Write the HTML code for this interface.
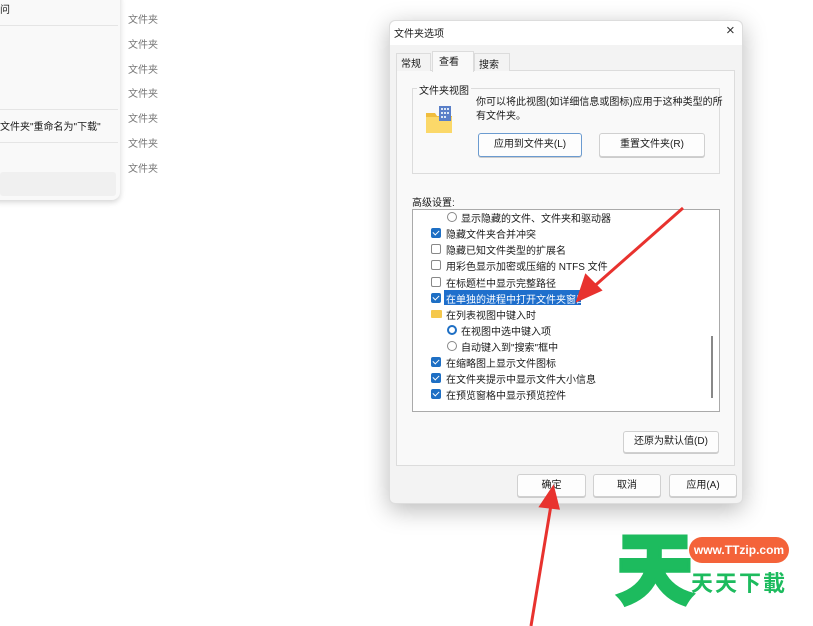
<!DOCTYPE html>
<html><head><meta charset="utf-8"><style>
*{margin:0;padding:0;box-sizing:border-box}
body{width:813px;height:626px;background:#fff;position:relative;overflow:hidden;font-family:"Liberation Sans","Noto Sans CJK SC",sans-serif;font-size:10px;color:#1a1a1a}
.a{position:absolute;white-space:nowrap}
.btn{position:absolute;border:1px solid #d0d0d0;border-radius:3px;background:#fdfdfd;text-align:center;font-size:10px;box-shadow:0 1px 0 #ccc}
.cb{position:absolute;width:10px;height:10px;border-radius:2px;left:431px}
.on{background:#1e6fc4}
.on:after{content:"";position:absolute;left:3px;top:1px;width:3px;height:5px;border:solid #fff;border-width:0 1px 1px 0;transform:rotate(45deg)}
.off{border:1px solid #888;background:#fff}
.rd{position:absolute;width:10px;height:10px;border-radius:50%;border:1px solid #888;left:447px}
.t{position:absolute;left:446px;font-size:10px}
.g{position:absolute;left:128px;color:#777;font-size:10px}
</style></head><body>
<div class="a" style="left:-10px;top:-10px;width:130px;height:210px;background:#f9f9f9;border-radius:8px;box-shadow:0 2px 6px rgba(0,0,0,.18)"></div>
<div class="a" style="left:0;top:25px;width:118px;height:1px;background:#e5e5e5"></div>
<div class="a" style="left:0;top:109px;width:118px;height:1px;background:#e5e5e5"></div>
<div class="a" style="left:0;top:142px;width:118px;height:1px;background:#e5e5e5"></div>
<div class="a" style="left:0;top:172px;width:116px;height:24px;background:#f0f0f0;border-radius:3px"></div>
<div class="a" style="left:0;top:1px;font-size:10px">问</div>
<div class="a" style="left:0;top:118px;font-size:10px">文件夹"重命名为"下载"</div>
<div class="g" style="top:11px">文件夹</div><div class="g" style="top:36px">文件夹</div><div class="g" style="top:61px">文件夹</div><div class="g" style="top:85px">文件夹</div><div class="g" style="top:110px">文件夹</div><div class="g" style="top:135px">文件夹</div><div class="g" style="top:160px">文件夹</div>
<div class="a" style="left:389px;top:20px;width:354px;height:484px;background:#f3f3f3;border-radius:6px;box-shadow:0 6px 24px rgba(0,0,0,.28);border:1px solid #ddd"></div>
<div class="a" style="left:390px;top:21px;width:352px;height:24px;background:#fff;border-radius:6px 6px 0 0"></div>
<div class="a" style="left:394px;top:25px;font-size:10px">文件夹选项</div>
<div class="a" style="left:726px;top:22px;font-size:15px;color:#333">×</div>
<div class="a" style="left:396px;top:70px;width:339px;height:396px;background:#f9f9f9;border:1px solid #dcdcdc"></div>
<div class="a" style="left:396px;top:53px;width:35px;height:18px;border:1px solid #dcdcdc;border-bottom:none;background:#f3f3f3;padding:1px 4px">常规</div>
<div class="a" style="left:474px;top:53px;width:36px;height:18px;border:1px solid #dcdcdc;border-bottom:none;background:#f3f3f3;padding:2px 4px">搜索</div>
<div class="a" style="left:432px;top:51px;width:42px;height:21px;border:1px solid #dcdcdc;border-bottom:none;background:#f9f9f9;padding:1px 6px">查看</div>
<div class="a" style="left:412px;top:88px;width:308px;height:86px;border:1px solid #dcdcdc"></div>
<div class="a" style="left:417px;top:82px;background:#f9f9f9;padding:0 2px">文件夹视图</div>
<svg class="a" style="left:425px;top:105px" width="30" height="30"><path d="M1 8h9l2 3h15v17H1z" fill="#f0bd3e"/><rect x="1" y="12" width="26" height="16" fill="#fbd869"/><rect x="14" y="1" width="12" height="15" fill="#5a7fc8"/><path d="M16 3h2v2h-2zM19 3h2v2h-2zM22 3h2v2h-2zM16 7h2v2h-2zM19 7h2v2h-2zM22 7h2v2h-2zM16 11h2v2h-2zM19 11h2v2h-2z" fill="#dde8f5"/></svg>
<div class="a" style="left:476px;top:96px;line-height:14px">你可以将此视图(如详细信息或图标)应用于这种类型的所<br>有文件夹。</div>
<div class="btn" style="left:478px;top:133px;width:104px;height:24px;line-height:22px;border-color:#6b9bd0">应用到文件夹(L)</div>
<div class="btn" style="left:599px;top:133px;width:106px;height:24px;line-height:22px">重置文件夹(R)</div>
<div class="a" style="left:412px;top:194px">高级设置:</div>
<div class="a" style="left:412px;top:209px;width:308px;height:203px;background:#fff;border:1px solid #aaa"></div>
<div class="a" style="left:711px;top:336px;width:2px;height:62px;background:#888"></div>
<div class="rd" style="top:212px"></div><div class="t" style="left:461px;top:210px">显示隐藏的文件、文件夹和驱动器</div>
<div class="cb on" style="top:228px"></div><div class="t" style="top:226px">隐藏文件夹合并冲突</div>
<div class="cb off" style="top:244px"></div><div class="t" style="top:242px">隐藏已知文件类型的扩展名</div>
<div class="cb off" style="top:260px"></div><div class="t" style="top:258px">用彩色显示加密或压缩的 NTFS 文件</div>
<div class="cb off" style="top:277px"></div><div class="t" style="top:275px">在标题栏中显示完整路径</div>
<div class="cb on" style="top:293px"></div><div class="a" style="left:444px;top:290px;width:137px;height:15px;background:#1f6fcc"></div><div class="t" style="top:291px;color:#fff">在单独的进程中打开文件夹窗口</div>
<div class="a" style="left:431px;top:310px;width:11px;height:8px;background:#f5c84c;border-radius:1px"></div><div class="t" style="top:307px">在列表视图中键入时</div>
<div class="rd" style="top:325px;border:2px solid #1e6fc4"></div><div class="t" style="left:461px;top:323px">在视图中选中键入项</div>
<div class="rd" style="top:341px"></div><div class="t" style="left:461px;top:339px">自动键入到"搜索"框中</div>
<div class="cb on" style="top:357px"></div><div class="t" style="top:355px">在缩略图上显示文件图标</div>
<div class="cb on" style="top:373px"></div><div class="t" style="top:371px">在文件夹提示中显示文件大小信息</div>
<div class="cb on" style="top:389px"></div><div class="t" style="top:387px">在预览窗格中显示预览控件</div>
<div class="btn" style="left:623px;top:431px;width:96px;height:22px;line-height:20px">还原为默认值(D)</div>
<div class="btn" style="left:517px;top:474px;width:69px;height:23px;line-height:21px">确定</div>
<div class="btn" style="left:593px;top:474px;width:68px;height:23px;line-height:21px">取消</div>
<div class="btn" style="left:669px;top:474px;width:68px;height:23px;line-height:21px">应用(A)</div>
<svg class="a" style="left:0;top:0" width="813" height="626"><g stroke="#e8322e" stroke-width="3" fill="#e8322e"><line x1="683" y1="208" x2="590" y2="290"/><path d="M578 300l8-24 14 14z"/><line x1="531" y1="626" x2="551" y2="505"/><path d="M553 488l-12 18 17 2z"/></g></svg>
<div class="a" style="left:616px;top:520px;font-size:78px;font-weight:900;color:#1dbb5e;line-height:90px;font-family:'Noto Sans CJK SC',sans-serif;-webkit-text-stroke:3px #1dbb5e">天</div>
<div class="a" style="left:689px;top:537px;width:100px;height:26px;background:#f4633a;border-radius:13px;color:#fff;font-weight:bold;font-size:12px;text-align:center;line-height:26px">www.TTzip.com</div>
<div class="a" style="left:691px;top:564px;font-size:22px;font-weight:bold;color:#1dbb5e;letter-spacing:2px;font-family:'Noto Sans CJK SC',sans-serif;line-height:36px">天天下載</div>
</body></html>
